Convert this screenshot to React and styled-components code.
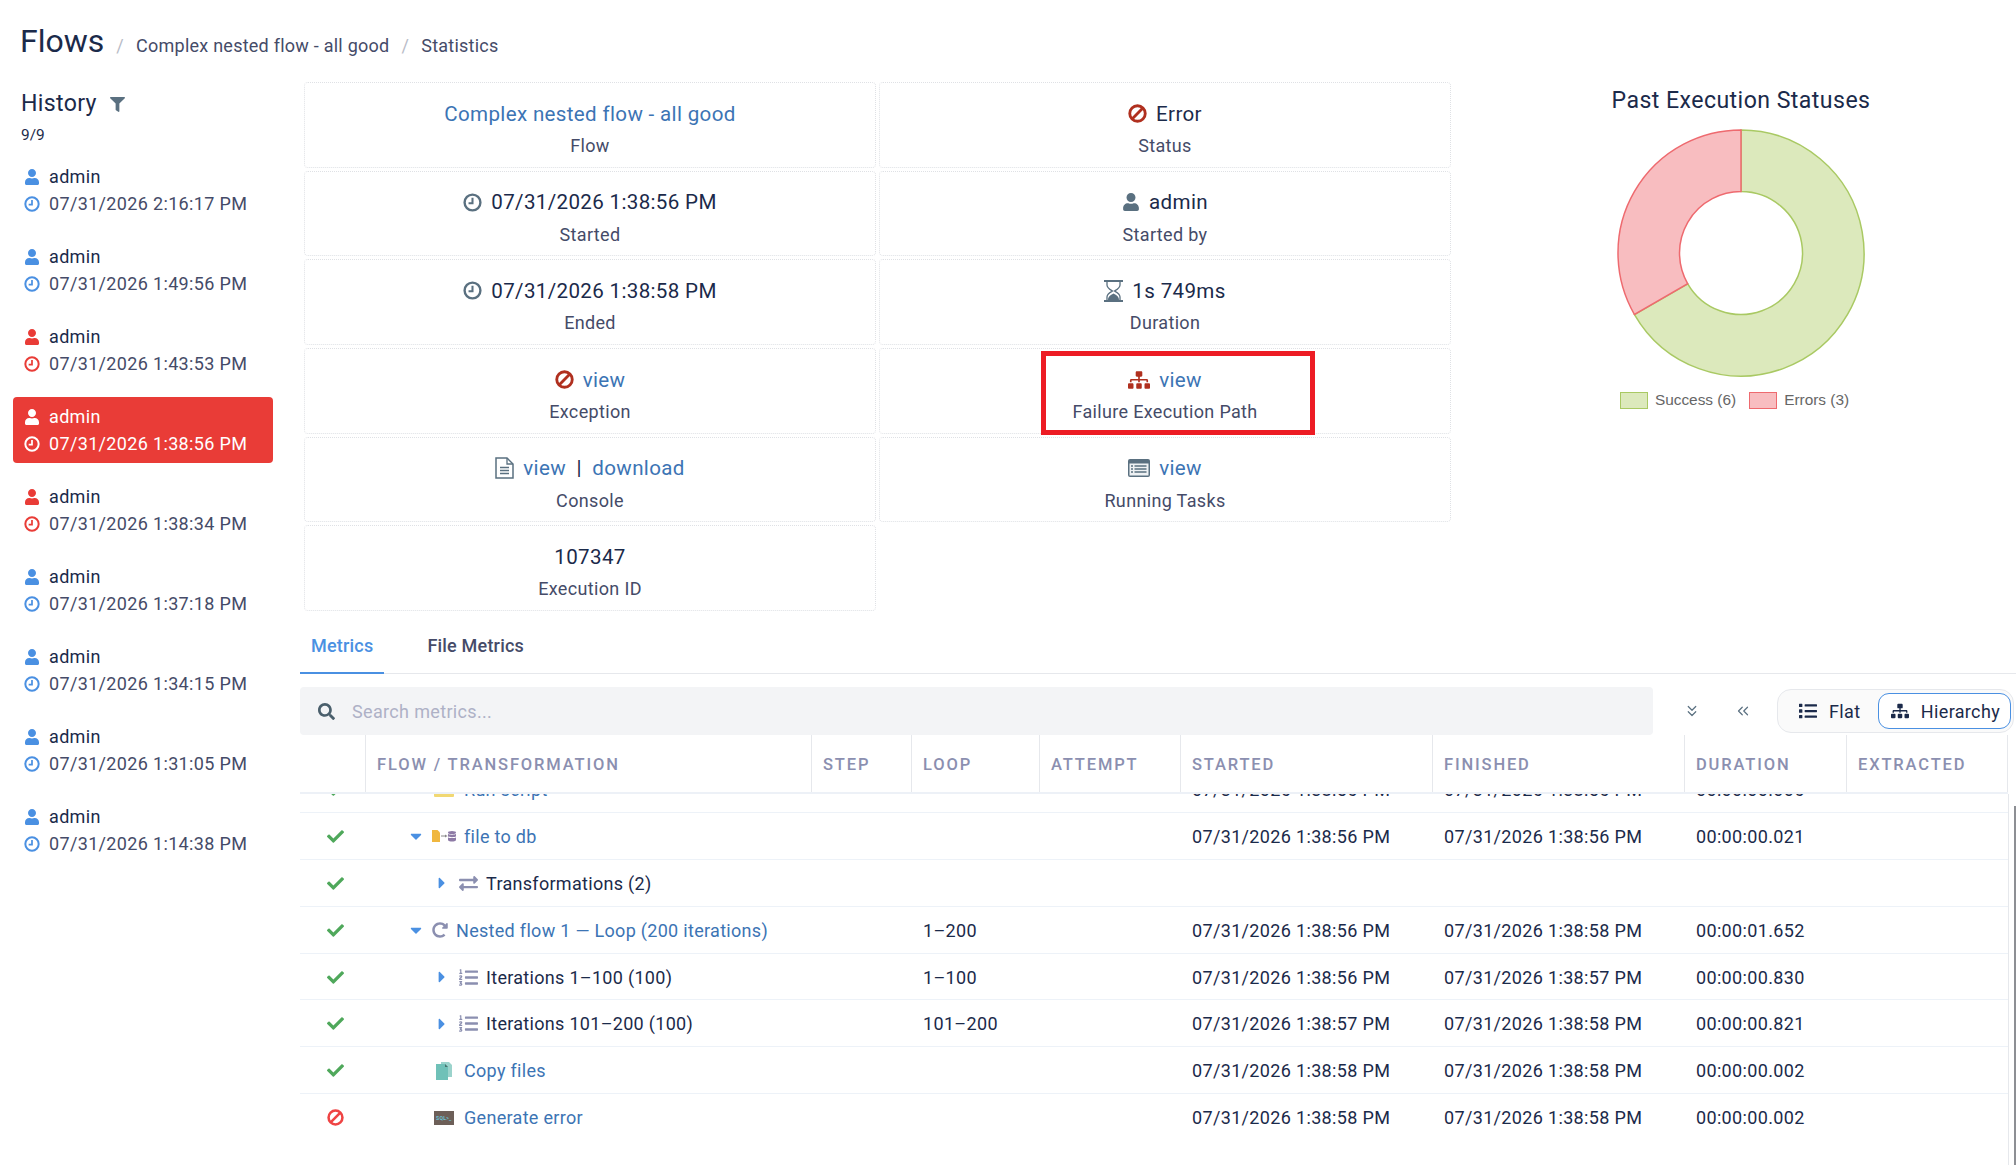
import React from 'react'
import styled, {createGlobalStyle} from 'styled-components'
import {
  FaCaretDown,
  FaCaretRight,
  FaCheck,
  FaExchangeAlt,
  FaFilter,
  FaList,
  FaListOl,
  FaRedoAlt,
  FaSearch,
  FaSitemap,
  FaUser
} from 'react-icons/fa'
import {ChevronsDown, ChevronsLeft} from 'lucide-react'

const COLORS = {
  navy: '#1b2a4a',
  slate: '#454b68',
  link: '#3c74b4',
  blue: '#4a90e2',
  red: '#e93c37',
  darkRed: '#b0301f',
  icon: '#5a7080',
  muted: '#8b8fb0',
  line: '#e6e8ec',
  rowLine: '#edf2f8',
  green: '#4fa85b'
}

const GRID = '66px 446px 100px 128px 141px 252px 252px 162px 161px'

const GlobalStyle = createGlobalStyle`
  html, body {
    margin: 0;
    padding: 0;
    background: #fff;
    overflow: hidden;
  }
  body {
    font-family: Roboto, "Liberation Sans", sans-serif;
    font-size: 18px;
    letter-spacing: 0.34px;
    color: ${COLORS.navy};
  }
`

const Page = styled.div`
  width: 2016px;
  height: 1165px;
  display: flex;
  flex-direction: column;
  overflow: hidden;
`

const Header = styled.header`
  height: 82px;
  flex: none;
  display: flex;
  align-items: baseline;
  padding: 21px 0 0 20px;
  box-sizing: border-box;
`

const Title = styled.h1`
  margin: 0;
  font-size: 32px;
  line-height: 41px;
  font-weight: 400;
  letter-spacing: 0;
`

const Crumb = styled.span`
  font-size: 18px;
  letter-spacing: 0.24px;
  color: ${COLORS.slate};
`

const CrumbSlash = styled.span`
  font-size: 18px;
  color: #b9bcc8;
  margin: 0 12px;
`

const Body = styled.div`
  flex: 1;
  min-height: 0;
  display: flex;
`

const Sidebar = styled.aside`
  width: 300px;
  flex: none;
  box-sizing: border-box;
  padding-left: 13px;
`

const HistoryHead = styled.div`
  display: flex;
  align-items: center;
  gap: 13px;
  padding-left: 8px;
  height: 42px;
  font-size: 23.1px;
  svg {
    color: ${COLORS.icon};
    font-size: 15px;
    margin-top: 2px;
  }
`

const Count = styled.div`
  padding-left: 8px;
  font-size: 15.4px;
  line-height: 22px;
  margin-bottom: 11px;
  letter-spacing: 0;
`

const HistoryList = styled.div`
  display: flex;
  flex-direction: column;
  gap: 14px;
  width: 260px;
`

const HistoryItem = styled.div`
  height: 66px;
  box-sizing: border-box;
  padding: 6px 0 0 11px;
  border-radius: 4px;
  background: ${p => (p.$active ? COLORS.red : 'transparent')};
  color: ${p => (p.$active ? '#fff' : p.$error ? COLORS.red : COLORS.blue)};
`

const ItemLine = styled.div`
  display: flex;
  align-items: center;
  height: 27px;
  gap: 9px;
`

const IconSlot = styled.span`
  width: 16px;
  flex: none;
  display: flex;
  justify-content: center;
`

const ItemUser = styled.span`
  color: ${p => (p.$active ? '#fff' : COLORS.navy)};
`

const ItemDate = styled.span`
  color: ${p => (p.$active ? '#fff' : COLORS.slate)};
`

const Main = styled.main`
  flex: 1;
  min-width: 0;
  display: flex;
  flex-direction: column;
`

const Summary = styled.section`
  display: flex;
  padding-left: 4px;
  height: 529px;
  flex: none;
`

const Cards = styled.div`
  display: grid;
  grid-template-columns: 572px 572px;
  grid-auto-rows: 85.7px;
  gap: 3px;
  align-content: start;
`

const Card = styled.div`
  position: relative;
  border: 1px dotted #dfe1e5;
  border-radius: 4px;
  box-sizing: border-box;
  padding-top: 15px;
  text-align: center;
`

const CardValue = styled.div`
  display: flex;
  align-items: center;
  justify-content: center;
  gap: 9px;
  height: 31px;
  font-size: 20.57px;
  color: ${p => (p.$link ? COLORS.link : COLORS.navy)};
`

const CardIcon = styled.span`
  display: flex;
  color: ${p => (p.$danger ? COLORS.darkRed : COLORS.icon)};
`

const Sep = styled.span`
  margin: 0 10.5px;
  color: ${COLORS.navy};
`

const CardLabel = styled.div`
  margin-top: 4px;
  font-size: 18px;
  line-height: 26px;
  color: ${COLORS.slate};
`

// the red box drawn over the screenshot as an annotation
const Annotation = styled.div`
  position: absolute;
  left: 161px;
  top: 2px;
  width: 274px;
  height: 84px;
  box-sizing: border-box;
  border: 5px solid #ed1c24;
`

const ChartPanel = styled.div`
  flex: none;
  width: 550px;
  margin-left: 15px;
  display: flex;
  flex-direction: column;
  align-items: center;
`

const ChartTitle = styled.div`
  font-size: 23.1px;
  line-height: 38px;
  letter-spacing: 0.45px;
`

const Donut = styled.svg`
  display: block;
  margin-top: 8px;
`

const Legend = styled.div`
  display: flex;
  gap: 13px;
  margin: 13px 13px 0 0;
`

const LegendItem = styled.div`
  display: flex;
  align-items: center;
  gap: 7px;
  font-family: "Liberation Sans", Arial, sans-serif;
  font-size: 15.4px;
  letter-spacing: 0;
  color: #666;
`

const Swatch = styled.span`
  width: 28px;
  height: 17px;
  box-sizing: border-box;
  border: 1.5px solid ${p => p.$stroke};
  background: ${p => p.$fill};
`

const Tabs = styled.nav`
  margin-top: 13px;
  height: 50px;
  flex: none;
  display: flex;
  box-sizing: border-box;
  border-bottom: 1.5px solid ${COLORS.line};
`

const Tab = styled.div`
  height: 50px;
  box-sizing: border-box;
  padding: 0 11px 5px;
  margin-right: 32px;
  display: flex;
  align-items: center;
  font-size: 18px;
  font-weight: 500;
  letter-spacing: 0.2px;
  color: ${p => (p.$active ? COLORS.blue : COLORS.slate)};
  border-bottom: 2px solid ${p => (p.$active ? COLORS.blue : 'transparent')};
`

const Toolbar = styled.div`
  margin-top: 13px;
  height: 48px;
  flex: none;
  display: flex;
  align-items: center;
`

const Search = styled.div`
  width: 1353px;
  height: 48px;
  flex: none;
  margin-right: 13px;
  box-sizing: border-box;
  padding-left: 18px;
  display: flex;
  align-items: center;
  gap: 17px;
  background: #f3f4f6;
  border-radius: 4px;
  font-size: 18px;
  color: #aeb1c6;
  svg {
    color: #4a5f6c;
    font-size: 17px;
  }
`

const ToolIcon = styled.span`
  width: 51px;
  flex: none;
  display: flex;
  justify-content: center;
  color: ${COLORS.icon};
`

const ToggleGroup = styled.div`
  margin-left: 9px;
  width: 237px;
  height: 44px;
  flex: none;
  box-sizing: border-box;
  padding: 3px 2px;
  display: flex;
  justify-content: space-between;
  background: #fafafa;
  border: 1px solid ${COLORS.line};
  border-radius: 14px;
`

const ToggleButton = styled.div`
  display: flex;
  align-items: center;
  gap: 12px;
  box-sizing: border-box;
  padding: 0 ${p => (p.$active ? 10 : 12)}px 0 ${p => (p.$active ? 12 : 18)}px;
  border: 1.5px solid ${p => (p.$active ? COLORS.blue : 'transparent')};
  border-radius: 11px;
  background: ${p => (p.$active ? '#fff' : 'transparent')};
  svg {
    font-size: 18px;
  }
`

const HeadRow = styled.div`
  display: grid;
  grid-template-columns: ${GRID};
  width: 1708px;
  height: 59px;
  flex: none;
  box-sizing: border-box;
  border-bottom: 2px solid #edf1f7;
`

const HeadCell = styled.div`
  display: flex;
  align-items: center;
  box-sizing: border-box;
  padding: 2px 0 0 11px;
  border-right: 1.5px solid ${COLORS.line};
  font-size: 16.5px;
  font-weight: 500;
  letter-spacing: 1.85px;
  white-space: nowrap;
  color: ${COLORS.muted};
  text-transform: uppercase;
`

const RowsViewport = styled.div`
  flex: 1;
  min-height: 0;
  overflow: hidden;
  position: relative;
`

// scrolled position of the tree: first row sits partly under the header
const RowsScroll = styled.div`
  width: 1708px;
  margin-top: -28px;
  border-right: 1.5px solid ${COLORS.line};
  box-sizing: content-box;
  min-height: 420px;
`

const Thumb = styled.div`
  position: absolute;
  right: 0;
  top: 12px;
  bottom: 0;
  width: 2px;
  background: #8d8f94;
`

const Row = styled.div`
  display: grid;
  grid-template-columns: ${GRID};
  height: 46.9px;
  box-sizing: border-box;
  padding-top: 1px;
  align-items: center;
  border-bottom: 1.5px solid ${p => (p.$last ? 'transparent' : COLORS.rowLine)};
`

const StatusCell = styled.div`
  display: flex;
  justify-content: center;
  padding-left: 4px;
  color: ${p => (p.$error ? '#ef4444' : COLORS.green)};
`

const NameCell = styled.div`
  display: flex;
  align-items: center;
  gap: 8px;
  padding-left: ${p => p.$indent}px;
  letter-spacing: 0.3px;
  color: ${p => (p.$link ? COLORS.link : COLORS.navy)};
`

const Caret = styled.span`
  width: 16px;
  flex: none;
  display: flex;
  justify-content: center;
  color: ${COLORS.blue};
`

const NodeIcon = styled.span`
  width: ${p => p.$width}px;
  flex: none;
  display: flex;
  justify-content: center;
  color: ${COLORS.muted};
`

const Cell = styled.div`
  padding-left: 11px;
`

const PersonIcon = () => <FaUser size={16} />

const ClockIcon = ({size = 16}) => (
  <svg width={size} height={size} viewBox='0 0 24 24' fill='none' stroke='currentColor'>
    <circle cx='12' cy='12' r='10' strokeWidth='3' />
    <path d='M12 6v7H7' strokeWidth='2.6' />
  </svg>
)

const BanIcon = ({size = 19}) => (
  <svg width={size} height={size} viewBox='0 0 24 24' fill='none' stroke='currentColor' strokeWidth='3.6'>
    <circle cx='12' cy='12' r='9.800' />
    <path d='M5.500 18.500L18.500 5.500' />
  </svg>
)

const HourglassIcon = () => (
  <svg width='19' height='22' viewBox='0 0 19 22'>
    <path d='M0 0h19v2H0zM0 20h19v2H0z' fill='currentColor' />
    <path d='M3 2v3c0 3 3 4.500 5.500 6C6 12.500 3 14 3 17v3M16 2v3c0 3-3 4.500-5.500 6 2.500 1.500 5.500 3 5.500 6v3' fill='none' stroke='currentColor' strokeWidth='1.3' />
    <path d='M9.500 13.500c2 1 5.500 2.500 5.500 6.500H4c0-4 3.500-5.500 5.500-6.500z' fill='currentColor' />
  </svg>
)

const DocIcon = () => (
  <svg width='19' height='22' viewBox='0 0 19 22' fill='none' stroke='currentColor'>
    <path d='M1 1h11l6 6v14H1z' strokeWidth='1.500' />
    <path d='M12 1v6h6' strokeWidth='1.300' />
    <path d='M5 10.500h9M5 13.500h9M5 16.500h9' strokeWidth='1.400' />
  </svg>
)

const TasksIcon = () => (
  <svg width='22' height='18' viewBox='0 0 22 18'>
    <rect width='22' height='18' rx='2' fill={COLORS.icon} />
    <rect x='1.500' y='4.500' width='19' height='12' fill='#eef1f3' />
    <path d='M3 7h2M3 10h2M3 13h2M6.500 7h12M6.500 10h12M6.500 13h12' stroke={COLORS.icon} strokeWidth='1.400' />
  </svg>
)

const ScriptIcon = () => (
  <svg width='20' height='16' viewBox='0 0 20 16'>
    <rect width='20' height='16' rx='1' fill='#f1d873' />
  </svg>
)

const FileToDbIcon = () => (
  <svg width='24' height='12' viewBox='0 0 24 12'>
    <path d='M0 0h5.500L8 2.500V12H0z' fill='#f0b73f' />
    <path d='M9 6h4.500' stroke='#888' strokeWidth='1' />
    <path d='M13 4.500L15.500 6 13 7.500z' fill='#888' />
    <ellipse cx='20' cy='2.500' rx='4' ry='1.500' fill='#8d7aa5' />
    <path d='M16 3.800c1 1.200 7 1.200 8 0v2.500c-1 1.200-7 1.200-8 0zM16 7.200c1 1.200 7 1.200 8 0v3c-1 1.800-7 1.800-8 0z' fill='#8d7aa5' />
  </svg>
)

const CopyIcon = () => (
  <svg width='16' height='18' viewBox='0 0 16 18'>
    <path d='M5 0h8l3 3v12H5z' fill='#9bd3cc' />
    <path d='M0 2h9l3 3v13H0z' fill='#6fc1b8' />
    <path d='M9 2l3 3H9z' fill='#47746f' />
  </svg>
)

const SqlIcon = () => (
  <svg width='20' height='14' viewBox='0 0 20 14'>
    <rect width='20' height='14' fill='#6d5f58' />
    <text x='2' y='9' fontSize='5' fontWeight='700' fontFamily='Roboto, sans-serif' fill='#6cc4d8'>SQL&gt;_</text>
  </svg>
)

const polar = (r, deg) => {
  const a = (deg - 90) * Math.PI / 180
  return `${(143 + r * Math.cos(a)).toFixed(2)} ${(125 + r * Math.sin(a)).toFixed(2)}`
}

const slice = (from, to) => {
  const large = to - from > 180 ? 1 : 0
  return `M${polar(123, from)}A123 123 0 ${large} 1 ${polar(123, to)}L${polar(61.5, to)}A61.5 61.5 0 ${large} 0 ${polar(61.5, from)}Z`
}

const HISTORY = [
  {date: '07/31/2026 2:16:17 PM'},
  {date: '07/31/2026 1:49:56 PM'},
  {date: '07/31/2026 1:43:53 PM', error: true},
  {date: '07/31/2026 1:38:56 PM', error: true, active: true},
  {date: '07/31/2026 1:38:34 PM', error: true},
  {date: '07/31/2026 1:37:18 PM'},
  {date: '07/31/2026 1:34:15 PM'},
  {date: '07/31/2026 1:31:05 PM'},
  {date: '07/31/2026 1:14:38 PM'}
]

const D = '07/31/2026 1:38:'

const ROWS = [
  {name: 'Run script', link: true, indent: 42, width: 24, icon: <ScriptIcon />, started: `${D}56 PM`, finished: `${D}56 PM`, duration: '00:00:00.006'},
  {name: 'file to db', link: true, indent: 42, caret: 'down', width: 24, icon: <FileToDbIcon />, started: `${D}56 PM`, finished: `${D}56 PM`, duration: '00:00:00.021'},
  {name: 'Transformations (2)', indent: 68, caret: 'right', width: 20, icon: <FaExchangeAlt size={19} />},
  {name: 'Nested flow 1 — Loop (200 iterations)', link: true, indent: 42, caret: 'down', width: 16, icon: <FaRedoAlt size={16} />, loop: '1–200', started: `${D}56 PM`, finished: `${D}58 PM`, duration: '00:00:01.652'},
  {name: 'Iterations 1–100 (100)', indent: 68, caret: 'right', width: 20, icon: <FaListOl size={19} />, loop: '1–100', started: `${D}56 PM`, finished: `${D}57 PM`, duration: '00:00:00.830'},
  {name: 'Iterations 101–200 (100)', indent: 68, caret: 'right', width: 20, icon: <FaListOl size={19} />, loop: '101–200', started: `${D}57 PM`, finished: `${D}58 PM`, duration: '00:00:00.821'},
  {name: 'Copy files', link: true, indent: 42, width: 24, icon: <CopyIcon />, started: `${D}58 PM`, finished: `${D}58 PM`, duration: '00:00:00.002'},
  {name: 'Generate error', link: true, indent: 42, width: 24, error: true, icon: <SqlIcon />, started: `${D}58 PM`, finished: `${D}58 PM`, duration: '00:00:00.002'}
]

const COLUMNS = ['', 'Flow / Transformation', 'Step', 'Loop', 'Attempt', 'Started', 'Finished', 'Duration', 'Extracted']

const InfoCard = ({label, link, icon, danger, children, marked}) => (
  <Card>
    <CardValue $link={link}>
      {icon && <CardIcon $danger={danger}>{icon}</CardIcon>}
      <span>{children}</span>
    </CardValue>
    <CardLabel>{label}</CardLabel>
    {marked && <Annotation />}
  </Card>
)

const App = () => (
  <Page>
    <GlobalStyle />
    <Header>
      <Title>Flows</Title>
      <CrumbSlash>/</CrumbSlash>
      <Crumb>Complex nested flow - all good</Crumb>
      <CrumbSlash>/</CrumbSlash>
      <Crumb>Statistics</Crumb>
    </Header>
    <Body>
      <Sidebar>
        <HistoryHead>History <FaFilter /></HistoryHead>
        <Count>9/9</Count>
        <HistoryList>
          {HISTORY.map(item => (
            <HistoryItem key={item.date} $active={item.active} $error={item.error}>
              <ItemLine>
                <IconSlot><PersonIcon /></IconSlot>
                <ItemUser $active={item.active}>admin</ItemUser>
              </ItemLine>
              <ItemLine>
                <IconSlot><ClockIcon /></IconSlot>
                <ItemDate $active={item.active}>{item.date}</ItemDate>
              </ItemLine>
            </HistoryItem>
          ))}
        </HistoryList>
      </Sidebar>
      <Main>
        <Summary>
          <Cards>
            <InfoCard label='Flow' link>Complex nested flow - all good</InfoCard>
            <InfoCard label='Status' danger icon={<BanIcon />}>Error</InfoCard>
            <InfoCard label='Started' icon={<ClockIcon size={19} />}>07/31/2026 1:38:56 PM</InfoCard>
            <InfoCard label='Started by' icon={<FaUser size={18} />}>admin</InfoCard>
            <InfoCard label='Ended' icon={<ClockIcon size={19} />}>07/31/2026 1:38:58 PM</InfoCard>
            <InfoCard label='Duration' icon={<HourglassIcon />}>1s 749ms</InfoCard>
            <InfoCard label='Exception' link danger icon={<BanIcon />}>view</InfoCard>
            <InfoCard label='Failure Execution Path' link danger icon={<FaSitemap size={22} />} marked>view</InfoCard>
            <InfoCard label='Console' link icon={<DocIcon />}>
              view<Sep>|</Sep>download
            </InfoCard>
            <InfoCard label='Running Tasks' link icon={<TasksIcon />}>view</InfoCard>
            <InfoCard label='Execution ID'>107347</InfoCard>
          </Cards>
          <ChartPanel>
            <ChartTitle>Past Execution Statuses</ChartTitle>
            <Donut width='286' height='250' viewBox='0 0 286 250'>
              <path d={slice(0, 240)} fill='#dce9bc' stroke='#a9c963' strokeWidth='1.5' />
              <path d={slice(240, 360)} fill='#f8bdc0' stroke='#ee6a6f' strokeWidth='1.5' />
            </Donut>
            <Legend>
              <LegendItem><Swatch $fill='#dce9bc' $stroke='#a9c963' />Success (6)</LegendItem>
              <LegendItem><Swatch $fill='#f8bdc0' $stroke='#ee6a6f' />Errors (3)</LegendItem>
            </Legend>
          </ChartPanel>
        </Summary>
        <Tabs>
          <Tab $active>Metrics</Tab>
          <Tab>File Metrics</Tab>
        </Tabs>
        <Toolbar>
          <Search><FaSearch />Search metrics...</Search>
          <ToolIcon><ChevronsDown size={18} strokeWidth={1.6} /></ToolIcon>
          <ToolIcon><ChevronsLeft size={18} strokeWidth={1.6} /></ToolIcon>
          <ToggleGroup>
            <ToggleButton><FaList />Flat</ToggleButton>
            <ToggleButton $active><FaSitemap />Hierarchy</ToggleButton>
          </ToggleGroup>
        </Toolbar>
        <HeadRow>
          {COLUMNS.map(col => <HeadCell key={col || 'status'}>{col}</HeadCell>)}
        </HeadRow>
        <RowsViewport>
          <RowsScroll>
            {ROWS.map((row, i) => (
              <Row key={row.name} $last={i === ROWS.length - 1}>
                <StatusCell $error={row.error}>
                  {row.error ? <BanIcon size={17} /> : <FaCheck size={17} />}
                </StatusCell>
                <NameCell $indent={row.indent} $link={row.link}>
                  <Caret>
                    {row.caret === 'down' && <FaCaretDown size={18} />}
                    {row.caret === 'right' && <FaCaretRight size={18} />}
                  </Caret>
                  <NodeIcon $width={row.width}>{row.icon}</NodeIcon>
                  {row.name}
                </NameCell>
                <Cell />
                <Cell>{row.loop}</Cell>
                <Cell />
                <Cell>{row.started}</Cell>
                <Cell>{row.finished}</Cell>
                <Cell>{row.duration}</Cell>
                <Cell />
              </Row>
            ))}
          </RowsScroll>
          <Thumb />
        </RowsViewport>
      </Main>
    </Body>
  </Page>
)

export default App
